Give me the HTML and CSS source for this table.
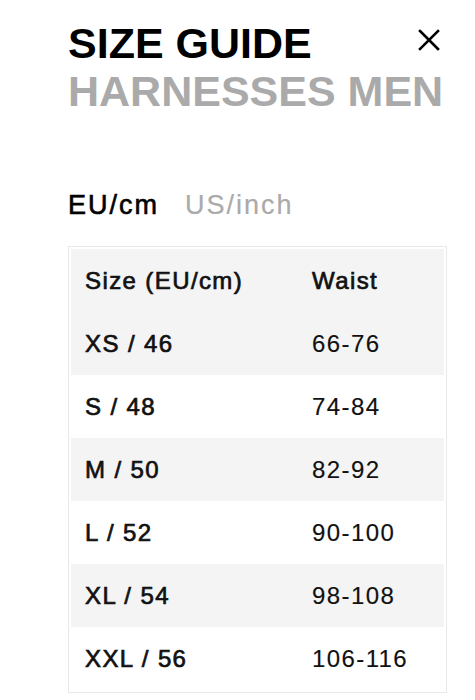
FILE: index.html
```html
<!DOCTYPE html>
<html lang="en">
<head>
<meta charset="utf-8">
<title>Size Guide</title>
<link rel="stylesheet" href="styles.css">
</head>
<body>
<div class="page">
  <header class="head">
    <h1 class="title">SIZE GUIDE</h1>
    <button class="close" aria-label="Close">
      <svg width="22" height="22" viewBox="0 0 22 22"><path d="M2 2 L20 20 M20 2 L2 20" stroke="#000" stroke-width="2.6" stroke-linecap="square" fill="none"/></svg>
    </button>
    <h2 class="subtitle">HARNESSES MEN</h2>
  </header>
  <nav class="tabs">
    <span class="tab active">EU/cm</span>
    <span class="tab">US/inch</span>
  </nav>
  <table class="sizes">
    <thead>
      <tr class="shade"><th class="c1">Size (EU/cm)</th><th class="c2">Waist</th></tr>
    </thead>
    <tbody>
      <tr class="shade"><td class="c1">XS / 46</td><td class="c2">66-76</td></tr>
      <tr><td class="c1">S / 48</td><td class="c2">74-84</td></tr>
      <tr class="shade"><td class="c1">M / 50</td><td class="c2">82-92</td></tr>
      <tr><td class="c1">L / 52</td><td class="c2">90-100</td></tr>
      <tr class="shade"><td class="c1">XL / 54</td><td class="c2">98-108</td></tr>
      <tr><td class="c1">XXL / 56</td><td class="c2">106-116</td></tr>
    </tbody>
  </table>
</div>
</body>
</html>
```

FILE: styles.css
```css
* { box-sizing: border-box; }
html, body { margin: 0; padding: 0; background: #fff; }
body {
  font-family: "Liberation Sans", Arial, sans-serif;
  color: #111;
}
.page {
  width: 379px;
  margin-left: 68px;
  padding-top: 19px;
}
.head {
  display: grid;
  grid-template-columns: 1fr auto;
}
.title, .subtitle {
  margin: 0;
  font-size: 43px;
  line-height: 48px;
  font-weight: 700;
  white-space: nowrap;
}
.title { color: #000; }
.subtitle {
  grid-column: 1 / 3;
  color: #aaaaaa;
}
.close {
  align-self: start;
  margin: 10px 7px 0 0;
  padding: 0;
  border: 0;
  background: none;
  width: 22px;
  height: 22px;
  display: block;
}
.close svg { display: block; }
.tabs {
  display: flex;
  gap: 26px;
  margin-top: 75px;
  font-size: 27px;
  line-height: 30px;
  letter-spacing: 2px;
}
.tab { color: #aaaaaa; -webkit-text-stroke: 0.2px #aaaaaa; }
.tab.active { color: #000; -webkit-text-stroke: 0.6px #000; }
.sizes {
  margin-top: 26px;
  width: 379px;
  border: 1px solid #e8e8e8;
  padding: 2px;
  border-spacing: 0;
  font-size: 24px;
  letter-spacing: 1.4px;
}
.sizes th, .sizes td {
  height: 63px;
  padding: 0 0 0 14px;
  text-align: left;
  vertical-align: middle;
  font-weight: 400;
}
.sizes .c1, .sizes th {
  -webkit-text-stroke: 0.7px #111;
}
.sizes .c1 { width: 227px; }
.sizes td.c2 { -webkit-text-stroke: 0.15px #111; }
.shade { background: #f4f4f4; }
```
